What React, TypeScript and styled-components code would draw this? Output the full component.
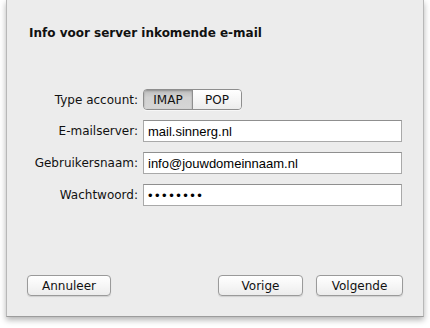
import React from 'react'
import styled, { createGlobalStyle } from 'styled-components'

const GlobalStyle = createGlobalStyle`
  html, body {
    margin: 0;
    padding: 0;
    background: #ffffff;
  }
  body {
    font-family: "DejaVu Sans", "Liberation Sans", sans-serif;
    -webkit-font-smoothing: antialiased;
  }
`

const Page = styled.div`
  width: 430px;
  height: 328px;
  box-sizing: border-box;
  padding: 0 6px;
`

const Sheet = styled.div`
  width: 418px;
  height: 317px;
  box-sizing: border-box;
  background: #ececec;
  border-left: 1px solid #b8b8b8;
  border-right: 1px solid #b8b8b8;
  border-bottom: 1px solid #9c9c9c;
  box-shadow: 0 3px 6px rgba(0, 0, 0, 0.3);
  display: flex;
  flex-direction: column;
`

const Title = styled.h1`
  margin: 0;
  padding: 26px 0 0 22px;
  font-size: 12px;
  line-height: 15px;
  font-weight: bold;
  color: #111;
`

const Form = styled.div`
  margin-top: 48px;
  display: grid;
  grid-template-columns: 131px 259px;
  column-gap: 5px;
  row-gap: 10px;
  align-items: center;
`

const Label = styled.label`
  text-align: right;
  font-size: 12px;
  color: #111;
`

const Segmented = styled.div`
  display: flex;
  width: 99px;
  height: 21px;
  box-sizing: border-box;
  border: 1px solid #8e8e8e;
  border-radius: 4px;
  overflow: hidden;
  box-shadow: 0 1px 0 rgba(255, 255, 255, 0.6);
`

const Segment = styled.div<{ $active?: boolean }>`
  flex: 1;
  display: flex;
  align-items: center;
  justify-content: center;
  font-size: 12px;
  color: #111;
  background: ${({ $active }) =>
    $active
      ? 'linear-gradient(#bdbdbd, #d2d2d2 40%, #d6d6d6)'
      : 'linear-gradient(#ffffff, #f4f4f4 60%, #ececec)'};
  box-shadow: ${({ $active }) => ($active ? 'inset 0 1px 2px rgba(0,0,0,0.25)' : 'none')};
  & + & {
    border-left: 1px solid #8e8e8e;
  }
`

const Field = styled.div<{ $secret?: boolean }>`
  height: 22px;
  box-sizing: border-box;
  background: #fff;
  border: 1px solid #a9a9a9;
  border-top-color: #8f8f8f;
  padding: 0 4px;
  display: flex;
  align-items: center;
  font-family: "Liberation Sans", Arial, sans-serif;
  font-size: 13px;
  letter-spacing: ${({ $secret }) => ($secret ? '2.5px' : '0')};
  color: #000;
`

const Footer = styled.div`
  margin-top: auto;
  padding: 0 20px 20px 20px;
  display: flex;
  align-items: center;
  gap: 13px;
`

const Spacer = styled.div`
  flex: 1;
`

const Button = styled.button<{ $width: number }>`
  width: ${({ $width }) => $width}px;
  height: 21px;
  padding: 0;
  box-sizing: border-box;
  border: 1px solid #9a9a9a;
  border-radius: 4px;
  background: linear-gradient(#ffffff, #f6f6f6 50%, #ececec);
  box-shadow: 0 1px 1px rgba(0, 0, 0, 0.12);
  font-family: "DejaVu Sans", "Liberation Sans", sans-serif;
  font-size: 12px;
  color: #111;
`

export default function App() {
  return (
    <>
      <GlobalStyle />
      <Page>
        <Sheet>
          <Title>Info voor server inkomende e-mail</Title>
          <Form>
            <Label>Type account:</Label>
            <Segmented>
              <Segment $active>IMAP</Segment>
              <Segment>POP</Segment>
            </Segmented>
            <Label>E-mailserver:</Label>
            <Field>mail.sinnerg.nl</Field>
            <Label>Gebruikersnaam:</Label>
            <Field>info@jouwdomeinnaam.nl</Field>
            <Label>Wachtwoord:</Label>
            <Field $secret>••••••••</Field>
          </Form>
          <Footer>
            <Button $width={84}>Annuleer</Button>
            <Spacer />
            <Button $width={85}>Vorige</Button>
            <Button $width={87}>Volgende</Button>
          </Footer>
        </Sheet>
      </Page>
    </>
  )
}
